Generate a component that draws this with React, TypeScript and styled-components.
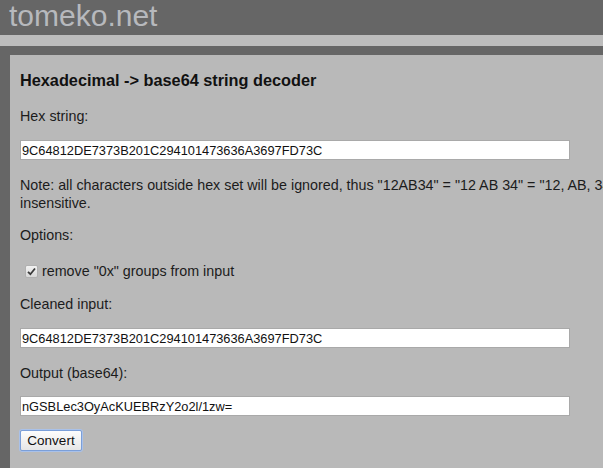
import React from "react";
import styled, { createGlobalStyle } from "styled-components";

const Global = createGlobalStyle`
  html, body { margin: 0; padding: 0; overflow: hidden; background: #666666; }
  body { font-family: "Liberation Sans", Arial, sans-serif; width: 603px; height: 468px; }
`;

const Page = styled.div`
  display: flex;
  flex-direction: column;
  background: #666666;
  min-height: 468px;
  width: 603px;
  overflow: hidden;
`;

const Header = styled.header`
  height: 35px;
  display: flex;
  align-items: center;
  padding-left: 9px;
`;

const Logo = styled.div`
  font-size: 30px;
  color: #b7b9bd;
  line-height: 35px;
  margin-top: -4px;
`;

const Stripe = styled.div`
  height: 11px;
  background: #bdbdbd;
  margin-bottom: 9px;
`;

const Panel = styled.main`
  margin-left: 10px;
  width: 760px;
  flex: 1;
  background: #b9b9b9;
  padding: 17px 10px 10px 10px;
  color: #1c1c1c;
  font-size: 14.3px;
  display: flex;
  flex-direction: column;
`;

const Title = styled.h1`
  margin: 0 0 18px 0;
  font-size: 16.3px;
  font-weight: bold;
  color: #111;
  line-height: 17px;
`;

const Label = styled.div<{ $mb?: number }>`
  line-height: 18px;
  margin-bottom: ${(p) => p.$mb ?? 15}px;
`;

const Field = styled.input<{ $mb?: number }>`
  box-sizing: border-box;
  width: 550px;
  height: 20px;
  border: 1px solid #a9a9a9;
  background: #fff;
  font-family: "Liberation Sans", Arial, sans-serif;
  font-size: 12.8px;
  color: #111;
  padding: 0 1px;
  margin: 0 0 ${(p) => p.$mb ?? 16}px 0;
  outline: none;
`;

const Note = styled.p`
  margin: 0 0 14px 0;
  line-height: 18px;
  width: 640px;
`;

const CheckRow = styled.label`
  display: flex;
  align-items: center;
  gap: 4px;
  padding-left: 5px;
  line-height: 18px;
  margin: 3px 0 15px 0;
`;

const Box = styled.span`
  width: 11px;
  height: 11px;
  border: 1px solid #b0b0b0;
  border-radius: 2px;
  background: linear-gradient(#f2f2f2, #d8d8d8);
  display: flex;
  align-items: center;
  justify-content: center;
`;

const Button = styled.button`
  align-self: flex-start;
  height: 21px;
  width: 62px;
  padding: 0;
  font-family: "Liberation Sans", Arial, sans-serif;
  font-size: 13.5px;
  color: #111;
  background: linear-gradient(#fdfdfd, #e6e6e6);
  border: 1px solid #7b9fd9;
  border-radius: 2px;
  box-shadow: 0 0 0 1px #a9c1e9;
`;

export default function App() {
  return (
    <Page>
      <Global />
      <Header>
        <Logo>tomeko.net</Logo>
      </Header>
      <Stripe />
      <Panel>
        <Title>Hexadecimal -&gt; base64 string decoder</Title>
        <Label>Hex string:</Label>
        <Field readOnly value="9C64812DE7373B201C294101473636A3697FD73C" />
        <Note>
          Note: all characters outside hex set will be ignored, thus "12AB34" = "12 AB 34" = "12, AB, 34", case
          insensitive.
        </Note>
        <Label>Options:</Label>
        <CheckRow>
          <Box>
            <svg width="9" height="9" viewBox="0 0 9 9">
              <path d="M1 4.8 L3.4 7.2 L8 1.5" fill="none" stroke="#3a3a3a" strokeWidth="1.8" />
            </svg>
          </Box>
          remove "0x" groups from input
        </CheckRow>
        <Label>Cleaned input:</Label>
        <Field readOnly value="9C64812DE7373B201C294101473636A3697FD73C" />
        <Label $mb={14}>Output (base64):</Label>
        <Field readOnly $mb={14} value="nGSBLec3OyAcKUEBRzY2o2l/1zw=" />
        <Button>Convert</Button>
      </Panel>
    </Page>
  );
}
